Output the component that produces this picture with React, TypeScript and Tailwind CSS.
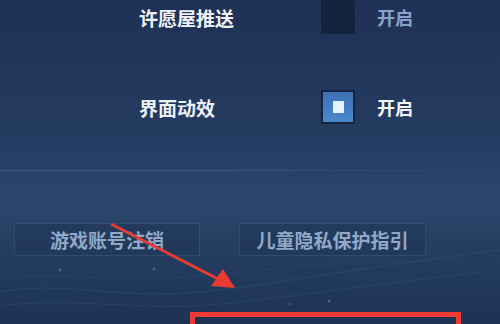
const font = { fontFamily: '"Noto Sans CJK SC", "Noto Sans", sans-serif' };

const SettingRow = ({ label, checked }: { label: string; checked: boolean }) => (
  <div className="flex items-center h-[34px] pl-[139px]">
    <span className="w-[182px] text-[19px] font-bold text-[#eef2f8] leading-none">{label}</span>
    {checked ? (
      <div className="w-[34px] h-[34px] border-2 border-[#16243f] bg-gradient-to-b from-[#3b72b4] to-[#4a88cc] flex items-center justify-center">
        <div className="w-[11px] h-[12px] bg-[#e2f5ff]" />
      </div>
    ) : (
      <div className="w-[34px] h-[34px] bg-[#14243f]" />
    )}
    <span
      className={`ml-[22px] text-[18px] font-bold leading-none ${checked ? "text-[#f2f5fa]" : "text-[#88a3c9]"}`}
    >
      开启
    </span>
  </div>
);

const Button = ({ label, width }: { label: string; width: string }) => (
  <button
    className={`${width} h-[33px] bg-[#213859]/70 border border-[#2f4b70] flex items-center justify-center text-[19px] font-bold text-[#90a9c9] leading-none`}
  >
    {label}
  </button>
);

export default function App() {
  return (
    <div
      className="relative w-[500px] h-[324px] overflow-hidden bg-[linear-gradient(180deg,#1f3154_0%,#243b60_40%,#2b476b_62%,#233c5f_80%,#1d3354_100%)]"
      style={font}
    >
      <svg className="absolute inset-0" width="500" height="324" viewBox="0 0 500 324">
        <path d="M0 292 C60 280 120 300 200 292 S340 270 500 250" stroke="#3d5b82" strokeWidth="1" fill="none" opacity="0.4" />
        <path d="M0 306 C70 296 140 312 220 304 S360 286 500 270" stroke="#3a587e" strokeWidth="1" fill="none" opacity="0.35" />
        <path d="M0 280 C50 270 100 282 170 278 S300 262 420 262" stroke="#38557b" strokeWidth="1" fill="none" opacity="0.3" />
        <circle cx="60" cy="270" r="1.5" fill="#46658c" />
        <circle cx="154" cy="269" r="1.5" fill="#46658c" />
        <circle cx="329" cy="301" r="1.5" fill="#46658c" />
        <circle cx="290" cy="304" r="1" fill="#46658c" />
      </svg>

      <div className="relative flex flex-col">
        <SettingRow label="许愿屋推送" checked={false} />
        <div className="h-[56px]" />
        <SettingRow label="界面动效" checked={true} />
        <div className="h-[46px]" />
        <div className="w-[427px] h-px bg-gradient-to-r from-[#3a5579] via-[#3a5579] to-[#2f4a6e]" />
        <div className="h-[52px]" />
        <div className="flex pl-[14px] gap-[39px]">
          <Button label="游戏账号注销" width="w-[186px]" />
          <Button label="儿童隐私保护指引" width="w-[187px]" />
        </div>
      </div>

      <svg className="absolute inset-0 pointer-events-none" width="500" height="324" viewBox="0 0 500 324">
        <line x1="111" y1="224" x2="220" y2="280" stroke="#ea3b33" strokeWidth="3" />
        <polygon points="235,288 211,286 223,269" fill="#ea3b33" />
      </svg>

      <div className="absolute left-[190px] top-[312px] w-[271px] h-[30px] border-[5px] border-[#ef3a32]" />
    </div>
  );
}
